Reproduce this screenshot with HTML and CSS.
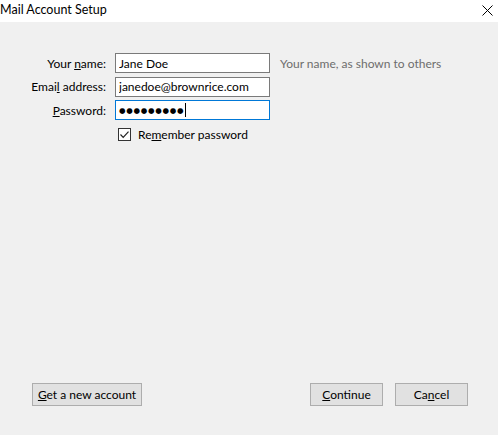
FILE: index.html
```html
<!DOCTYPE html>
<html lang="en">
<head>
<meta charset="utf-8">
<title>Mail Account Setup</title>
<link rel="stylesheet" href="styles.css">
</head>
<body>
<div class="window">
  <header class="titlebar">
    <span class="title">Mail Account Setup</span>
    <span class="close" aria-label="Close">
      <svg width="11" height="11" viewBox="0 0 11 11"><path d="M0.5 0.5 L10.5 10.5 M10.5 0.5 L0.5 10.5" stroke="#000" stroke-width="1" fill="none"/></svg>
    </span>
  </header>

  <main class="body">
    <form class="form">
      <label class="label" for="name">Your <u>n</u>ame:</label>
      <div class="field"><input id="name" class="input" value="Jane Doe"></div>
      <span class="hint">Your name, as shown to others</span>

      <label class="label" for="email">Emai<u>l</u> address:</label>
      <div class="field"><input id="email" class="input" value="janedoe@brownrice.com"></div>
      <span></span>

      <label class="label" for="pw"><u>P</u>assword:</label>
      <div class="field"><div id="pw" class="input focused"><span class="dots">●●●●●●●●●</span><span class="caret"></span></div></div>
      <span></span>

      <span></span>
      <label class="remember">
        <span class="checkbox">
          <svg width="11" height="11" viewBox="0 0 11 11"><path d="M1.5 5.5 L4.2 8.3 L9.5 2.6" stroke="#222" stroke-width="1.2" fill="none"/></svg>
        </span>
        <span>Re<u>m</u>ember password</span>
      </label>
      <span></span>
    </form>

    <footer class="footer">
      <button class="btn wide" type="button"><u>G</u>et a new account</button>
      <div class="actions">
        <button class="btn" type="button"><u>C</u>ontinue</button>
        <button class="btn" type="button">Ca<u>n</u>cel</button>
      </div>
    </footer>
  </main>
</div>
</body>
</html>
```

FILE: styles.css
```css
* { box-sizing: border-box; }

html, body {
  margin: 0;
  height: 100%;
}

body {
  background: #f0f0f0;
  font-family: Lato, "Noto Sans", sans-serif;
  font-size: 12px;
  color: #000;
}

.window {
  display: flex;
  flex-direction: column;
  height: 435px;
}

.titlebar {
  height: 22px;
  background: #fff;
  display: flex;
  align-items: center;
  justify-content: space-between;
  padding: 0 5px 0 0;
}

.title {
  font-size: 12.5px;
  line-height: 22px;
  padding-bottom: 3px;
}

.close {
  display: flex;
  padding-bottom: 2px;
}

.body {
  flex: 1;
  display: flex;
  flex-direction: column;
  justify-content: space-between;
  padding: 31px 30px 29px 32px;
}

.form {
  display: grid;
  grid-template-columns: 74px 155px auto;
  column-gap: 9px;
  row-gap: 3.5px;
  align-items: center;
}

.label {
  text-align: right;
  white-space: nowrap;
  justify-self: end;
}

.field {
  height: 20px;
}

.input {
  display: flex;
  align-items: center;
  width: 155px;
  height: 20px;
  margin: 0;
  padding: 0 3px;
  border: 1px solid #7a7a7a;
  background: #fff;
  font: inherit;
  color: #000;
  outline: none;
}

.input.focused {
  border-color: #0078d7;
}

.dots {
  font-size: 7.5px;
  letter-spacing: 0.7px;
  font-family: "DejaVu Sans", sans-serif;
}

.caret {
  width: 1px;
  height: 14px;
  background: #000;
  margin-left: 1px;
}

.hint {
  color: #6d6d6d;
  padding-left: 1px;
  white-space: nowrap;
}

.remember {
  display: flex;
  align-items: center;
  gap: 7px;
  margin-top: 3px;
  padding-left: 3px;
}

.checkbox {
  width: 13px;
  height: 13px;
  border: 1px solid #333;
  background: #fff;
  display: flex;
  align-items: center;
  justify-content: center;
}

.footer {
  display: flex;
  justify-content: space-between;
  align-items: flex-end;
}

.actions {
  display: flex;
  gap: 12px;
}

.btn {
  height: 23px;
  width: 73px;
  margin: 0;
  padding: 0;
  border: 1px solid #adadad;
  background: #e1e1e1;
  font: inherit;
  color: #000;
}

.btn.wide {
  width: 110px;
}
```
